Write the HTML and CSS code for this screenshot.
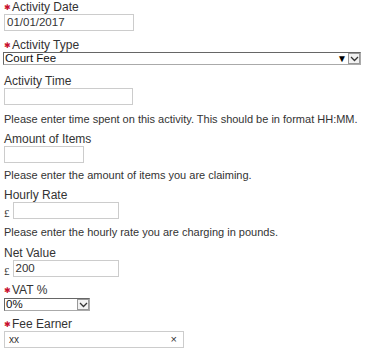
FILE: index.html
```html
<!DOCTYPE html>
<html lang="en">
  <head>
    <meta charset="UTF-8" />
    <title>Activity</title>
    <link rel="stylesheet" href="styles.css">
  </head>
  <body>
    <form class="form">
      <div class="field gap-7">
        <label class="label"><span class="req">&#10033;</span>Activity Date</label>
        <div class="input date">01/01/2017</div>
      </div>

      <div class="field gap-9">
        <label class="label"><span class="req">&#10033;</span>Activity Type</label>
        <div class="select wide">
          <span class="select-text">Court Fee</span>
          <span class="tri">&#9660;</span>
          <span class="arrow">
            <svg width="9" height="6" viewBox="0 0 9 6"><path d="M1 1 L4.5 4.5 L8 1" fill="none" stroke="#333" stroke-width="1.3"/></svg>
          </span>
        </div>
      </div>

      <div class="field">
        <label class="label">Activity Time</label>
        <div class="input time"></div>
        <p class="help help-7">Please enter time spent on this activity. This should be in format HH:MM.</p>
      </div>

      <div class="field">
        <label class="label">Amount of Items</label>
        <div class="input items"></div>
        <p class="help help-5">Please enter the amount of items you are claiming.</p>
      </div>

      <div class="field gap-7">
        <label class="label">Hourly Rate</label>
        <div class="money">
          <span class="pound">&pound;</span>
          <div class="input rate"></div>
        </div>
        <p class="help">Please enter the hourly rate you are charging in pounds.</p>
      </div>

      <div class="field">
        <label class="label">Net Value</label>
        <div class="money">
          <span class="pound">&pound;</span>
          <div class="input rate">200</div>
        </div>
      </div>

      <div class="field">
        <label class="label"><span class="req">&#10033;</span>VAT %</label>
        <div class="select vat">
          <span class="select-text">0%</span>
          <span class="arrow">
            <svg width="9" height="6" viewBox="0 0 9 6"><path d="M1 1 L4.5 4.5 L8 1" fill="none" stroke="#333" stroke-width="1.3"/></svg>
          </span>
        </div>
      </div>

      <div class="field">
        <label class="label"><span class="req">&#10033;</span>Fee Earner</label>
        <div class="input earner">
          <span class="small">xx</span>
          <span class="clear">&times;</span>
        </div>
      </div>
    </form>
  </body>
</html>
```

FILE: styles.css
```css
body {
  margin: 0;
  padding: 0;
  background-color: #fff;
  color: #333;
  font-family: "Liberation Sans", Arial, sans-serif;
}

.form {
  padding: 0 4px;
  display: flex;
  flex-direction: column;
}

.field {
  display: flex;
  flex-direction: column;
  align-items: flex-start;
  margin-bottom: 6px;
}

.gap-7 {
  margin-bottom: 7px;
}

.gap-9 {
  margin-bottom: 9px;
}

.label {
  font-size: 12px;
  line-height: 14px;
  color: #333;
}

.req {
  color: #c8102e;
  font-size: 8px;
  line-height: 0;
  margin-right: 1px;
  vertical-align: 1px;
}

.input {
  box-sizing: border-box;
  height: 17px;
  border: 1px solid #ccc;
  font-size: 11.5px;
  line-height: 15px;
  padding: 0 2px;
  color: #333;
  background-color: #fff;
  display: flex;
  align-items: center;
}

.date {
  width: 130px;
}

.time {
  width: 129px;
}

.items {
  width: 80px;
}

.rate {
  width: 106px;
}

.earner {
  width: 180px;
  justify-content: space-between;
  padding: 0 6px 0 4px;
}

.money {
  display: flex;
  align-items: center;
  gap: 3px;
}

.pound {
  font-family: "Liberation Serif", serif;
  font-size: 11px;
  color: #333;
  padding-top: 4px;
}

.help {
  font-size: 11px;
  line-height: 14px;
  margin: 6px 0 0 0;
  color: #333;
}

.help-7 {
  margin-top: 7px;
}

.help-5 {
  margin-top: 5px;
}

.select {
  box-sizing: border-box;
  height: 13px;
  display: flex;
  align-items: center;
  border: 1px solid #aaa;
  border-top-color: #666;
  border-left-color: #666;
  background-color: #fff;
  font-size: 11.5px;
  line-height: 11px;
  color: #111;
}

.select-text {
  flex-grow: 1;
  padding-left: 1px;
}

.wide {
  width: 358px;
  margin-left: -1px;
}

.vat {
  width: 86px;
  margin-top: 1px;
}

.tri {
  font-size: 10px;
  color: #000;
  margin-right: 1px;
}

.arrow {
  box-sizing: border-box;
  width: 12px;
  height: 11px;
  border: 1px solid #999;
  background-color: #f2f2f2;
  display: flex;
  align-items: center;
  justify-content: center;
}

.small {
  font-size: 10px;
}

.clear {
  font-size: 11px;
  color: #333;
}
```
